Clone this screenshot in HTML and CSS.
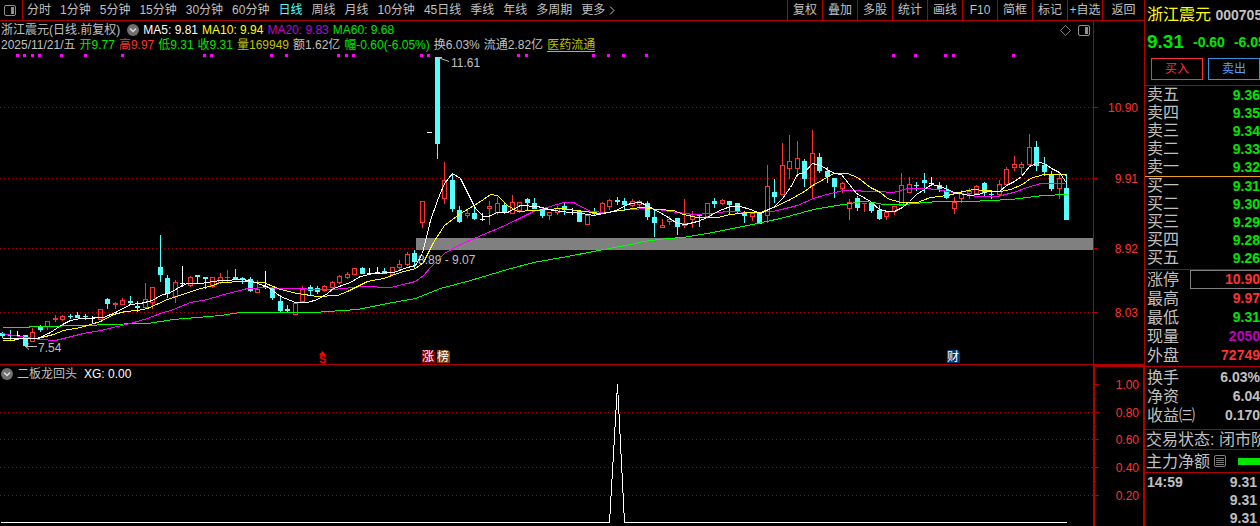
FILE: index.html
```html
<!DOCTYPE html>
<html lang="zh-CN">
<head>
    <meta charset="UTF-8">
    <meta name="viewport" content="width=device-width, initial-scale=1.0">
    <title>浙江震元 000705</title>
    <link rel="stylesheet" href="styles.css">
</head>
<body>
    <main class="workspace">
        <nav class="toolbar">
            <button class="panel-toggle" aria-label="侧栏">
                <svg width="12" height="11" viewBox="0 0 12 11"><rect x="0.5" y="0.5" width="11" height="10" rx="1.5" fill="none" stroke="#909090"/><rect x="7" y="2" width="3" height="7" fill="#909090"/></svg>
            </button>
            <div class="periods">
                <button>分时</button>
                <button>1分钟</button>
                <button>5分钟</button>
                <button>15分钟</button>
                <button>30分钟</button>
                <button>60分钟</button>
                <button class="active">日线</button>
                <button>周线</button>
                <button>月线</button>
                <button>10分钟</button>
                <button>45日线</button>
                <button>季线</button>
                <button>年线</button>
                <button>多周期</button>
                <button class="more">更多<svg width="6" height="9" viewBox="0 0 6 9"><path d="M1 0.5L5 4.5L1 8.5" fill="none" stroke="#c0c0c0"/></svg></button>
            </div>
            <div class="tools">
                <button>复权</button>
                <button>叠加</button>
                <button>多股</button>
                <button>统计</button>
                <button>画线</button>
                <button>F10</button>
                <button>简框</button>
                <button>标记</button>
                <button>+自选</button>
                <button class="back">返回</button>
            </div>
        </nav>

        <section class="pane pane-main">
            <div class="plot">
                <div class="legend">
                    <span class="name">浙江震元(日线.前复权)</span>
                    <button class="drop" aria-label="指标菜单"><svg width="12" height="12" viewBox="0 0 12 12"><circle cx="6" cy="6" r="6" fill="#707070"/><path d="M3 4.5L6 7.5L9 4.5" fill="none" stroke="#ddd" stroke-width="1.5"/></svg></button>
                    <span class="ma5">MA5: 9.81</span>
                    <span class="ma10">MA10: 9.94</span>
                    <span class="ma20">MA20: 9.83</span>
                    <span class="ma60">MA60: 9.68</span>
                    <span class="pane-icons">
                        <svg width="11" height="11" viewBox="0 0 11 11"><path d="M5.5 0.5L10.5 5.5L5.5 10.5L0.5 5.5Z" fill="none" stroke="#808080"/></svg>
                        <svg width="12" height="11" viewBox="0 0 12 11"><rect x="0.5" y="0.5" width="11" height="10" rx="1.5" fill="none" stroke="#909090"/><rect x="7" y="2" width="3" height="7" fill="#909090"/></svg>
                    </span>
                </div>
                <div class="legend quote">
                    <span>2025/11/21/五</span>
                    <span class="down">开9.77</span>
                    <span class="up">高9.97</span>
                    <span class="down">低9.31</span>
                    <span class="down">收9.31</span>
                    <span class="volume">量169949</span>
                    <span>额1.62亿</span>
                    <span class="down">幅-0.60(-6.05%)</span>
                    <span>换6.03%</span>
                    <span>流通2.82亿</span>
                    <a class="sector" href="#">医药流通</a>
                </div>
                <svg id="kline" class="chart"></svg>
            </div>
            <svg id="price-axis" class="axis"></svg>
        </section>

        <section class="pane pane-sub">
            <div class="plot">
                <div class="legend">
                    <button class="drop" aria-label="指标菜单"><svg width="12" height="12" viewBox="0 0 12 12"><circle cx="6" cy="6" r="6" fill="#707070"/><path d="M3 4.5L6 7.5L9 4.5" fill="none" stroke="#ddd" stroke-width="1.5"/></svg></button>
                    <span class="name">二板龙回头</span>
                    <span class="ma5">XG: 0.00</span>
                </div>
                <svg id="signal" class="chart"></svg>
            </div>
            <svg id="signal-axis" class="axis"></svg>
        </section>
    </main>

    <aside class="sidebar">
        <header class="stock">
            <h1><span>浙江震元</span> <b>000705</b></h1>
            <p class="price down"><strong>9.31</strong><b>-0.60</b><b>-6.05%</b></p>
            <div class="trade">
                <button class="buy">买入</button>
                <button class="sell">卖出</button>
            </div>
        </header>
        <table class="book down">
            <tr><th>卖五</th><td>9.36</td></tr>
            <tr><th>卖四</th><td>9.35</td></tr>
            <tr><th>卖三</th><td>9.34</td></tr>
            <tr><th>卖二</th><td>9.33</td></tr>
            <tr><th>卖一</th><td>9.32</td></tr>
        </table>
        <table class="book bids down">
            <tr><th>买一</th><td>9.31</td></tr>
            <tr><th>买二</th><td>9.30</td></tr>
            <tr><th>买三</th><td>9.29</td></tr>
            <tr><th>买四</th><td>9.28</td></tr>
            <tr><th>买五</th><td>9.26</td></tr>
        </table>
        <table class="stats">
            <tr><th>涨停</th><td class="up boxed">10.90</td></tr>
            <tr><th>最高</th><td class="up">9.97</td></tr>
            <tr><th>最低</th><td class="down">9.31</td></tr>
            <tr><th>现量</th><td class="lots">2050</td></tr>
            <tr><th>外盘</th><td class="up">72749</td></tr>
        </table>
        <table class="stats finance">
            <tr><th>换手</th><td>6.03%</td></tr>
            <tr><th>净资</th><td>6.04</td></tr>
            <tr><th>收益㈢</th><td>0.170</td></tr>
        </table>
        <p class="status">交易状态: 闭市阶段</p>
        <p class="netflow">主力净额
            <svg width="12" height="12" viewBox="0 0 12 12"><rect x="0.5" y="0.5" width="11" height="11" rx="1.5" fill="none" stroke="#808080"/><path d="M2 3.5H10M2 5.5H10M2 7.5H10M2 9.5H10" stroke="#808080"/></svg>
            <span class="bar"></span>
        </p>
        <table class="ticks">
            <tr><th>14:59</th><td>9.31</td></tr>
            <tr><th></th><td>9.31</td></tr>
            <tr><th></th><td>9.31</td></tr>
        </table>
    </aside>
    <script src="script.js"></script>
</body>
</html>
```
FILE: styles.css
```css
* {
    box-sizing: border-box;
}

body {
    margin: 0;
    height: 100vh;
    display: grid;
    grid-template-columns: minmax(0, 1fr) 116px;
    overflow: hidden;
    background-color: #000;
    color: #c0c0c0;
    font-family: "Liberation Sans", "Noto Sans CJK SC", sans-serif;
    font-size: 12px;
    line-height: 14px;
}

h1, p {
    margin: 0;
    font-weight: normal;
    white-space: nowrap;
}

button {
    padding: 0;
    border: none;
    background: none;
    color: inherit;
    font: inherit;
    white-space: nowrap;
    cursor: pointer;
}

svg {
    display: block;
    flex: none;
}

.up { color: #ff3232; }
.down { color: #00e600; }

.workspace {
    display: flex;
    flex-direction: column;
    border-bottom: 1px solid #b00000;
}

/* toolbar */

.toolbar {
    display: flex;
    height: 21px;
    border-bottom: 1px solid #b00000;
}

.panel-toggle {
    padding: 0 6px 0 4px;
    border-right: 1px solid #b00000;
}

.periods {
    flex: 1;
    display: flex;
    gap: 9px;
    padding-left: 4px;
}

.periods .active {
    color: #54ffff;
}

.more {
    display: flex;
    align-items: center;
    gap: 4px;
}

.tools {
    display: flex;
}

.tools button {
    width: 35px;
    border-left: 1px solid #b00000;
}

.tools .back {
    width: 42px;
}

/* chart panes */

.pane {
    display: flex;
}

.pane-main {
    height: 343px;
}

.pane-sub {
    flex: 1;
    min-height: 0;
    border-top: 1px solid #b00000;
}

.plot {
    flex: 1;
    min-width: 0;
    display: flex;
    flex-direction: column;
}

.legend {
    display: flex;
    align-items: center;
    gap: 4px;
    height: 16px;
    padding: 2px 0 0 1px;
    white-space: nowrap;
}

.quote {
    height: 15px;
    padding-top: 0;
}

.legend .name {
    padding-right: 3px;
}

.pane-icons {
    display: flex;
    gap: 7px;
    margin-left: auto;
    padding-right: 3px;
}

.ma5 { color: #fff; }
.ma10 { color: #ffff00; }
.ma20 { color: #c800c8; }
.ma60 { color: #00e600; }
.volume { color: #c0c000; }

.sector {
    color: #c0c000;
    text-underline-offset: 2px;
}

.chart {
    width: 100%;
    flex: 1;
    min-height: 0;
}

.axis {
    width: 51px;
    height: 100%;
    border-left: 1px solid #b00000;
}

.pane-sub .axis {
    border: 2px solid #b00000;
    border-right-width: 1px;
}

svg text {
    fill: #c0c0c0;
}

.axis text {
    fill: #ff3232;
    text-anchor: end;
}

.chart .badge {
    fill: #fff;
}

.chart .dividend {
    fill: #ff0000;
    font-size: 11px;
    font-weight: bold;
}

/* quote sidebar */

.sidebar {
    overflow: hidden;
    border-left: 1px solid #b00000;
    font-size: 16px;
}

.sidebar b,
.sidebar td {
    font-size: 14px;
    font-weight: bold;
}

.stock {
    height: 86px;
    padding: 5px 0 0 2px;
    border-bottom: 1px solid #b00000;
}

.stock h1 {
    font-size: 16px;
    line-height: 20px;
}

.stock h1 span {
    color: #ffff00;
}

.price {
    display: flex;
    align-items: center;
    gap: 9px;
    height: 33px;
}

.price strong {
    font-size: 19px;
}

.trade {
    display: flex;
    gap: 5px;
    padding-left: 4px;
}

.trade button {
    flex: none;
    width: 52px;
    height: 22px;
    border: 1px solid;
    font-size: 12px;
}

.trade .buy { color: #ff3232; }

.trade .sell {
    color: #54a0ff;
    border-color: #3c90e0;
}

table {
    width: 100%;
    border-collapse: collapse;
    line-height: 18px;
}

th {
    padding: 0 0 0 2px;
    color: #c0c0c0;
    font-weight: normal;
    text-align: left;
    white-space: nowrap;
}

td {
    padding: 0;
    text-align: right;
}

.bids {
    border-top: 1px solid #f0a020;
    border-collapse: separate;
    border-spacing: 0;
}

.stats {
    border-top: 1px solid #b00000;
    border-collapse: separate;
    border-spacing: 0;
    margin-top: 2px;
    line-height: 19px;
}

.stats .boxed {
    width: 70px;
    border: 1px solid #808080;
    border-right: none;
    line-height: 17px;
}

.lots { color: #c000c0; }

.finance {
    margin-top: 1px;
    padding-top: 1px;
}

.status,
.netflow {
    height: 20px;
    padding-left: 1px;
    border-top: 1px solid #b00000;
    line-height: 19px;
}

.status {
    margin-top: 4px;
}

.netflow {
    display: flex;
    align-items: center;
    gap: 4px;
    height: 23px;
}

.bar {
    flex: 1;
    height: 7px;
    margin-left: 8px;
    background-color: #00e600;
}

.ticks {
    border-top: 1px solid #b00000;
}

.ticks th {
    font-size: 14px;
    font-weight: bold;
}

.ticks td {
    padding-right: 3px;
}
```
FILE: script.js
```js
const RED = '#ff3232';
const CYAN = '#54ffff';
const WHITE = '#ffffff';
const GRID = '#b00000';

// one entry per day: type (c = fall, r = rise, w = flat), high, body top, body bottom, low
const candles = `
c 332 333 336 338|c 330 335 336 340|w 331 335 336 337|c 335 335 346 346|r 328 332 342 342
c 325 326 330 332|r 321 321 327 330|r 315 318 320 322|r 315 316 320 321|c 314 316 317 319
c 312 315 318 318|c 314 316 317 320|w 316 318 319 324|r 309 309 320 320|c 298 299 304 309
r 302 303 305 309|r 298 300 305 305|c 296 301 303 304|c 301 306 308 312|r 283 299 308 308
r 287 287 303 309|c 235 267 275 282|c 275 278 294 298|r 280 282 297 303|w 266 283 284 287
r 276 277 286 287|c 275 275 277 283|c 277 277 279 289|r 277 277 287 288|r 273 277 283 284
r 270 277 278 283|c 269 277 279 280|c 277 278 279 284|c 277 279 291 292|r 280 289 293 293
w 271 286 287 289|c 288 288 298 300|c 295 301 311 312|c 305 309 311 313|r 303 303 315 315
r 286 289 302 302|c 285 287 291 295|c 286 288 292 294|r 285 286 291 292|r 281 282 288 289
r 275 276 283 284|r 272 274 278 279|r 268 268 275 275|c 267 268 274 274|w 268 273 274 275
w 267 272 273 274|c 268 271 274 274|r 267 267 275 275|r 260 264 268 271|r 252 254 265 266
c 250 253 262 268|r 201 201 223 228|w 132 132 133 133|c 57 57 144 159|r 162 180 199 204
c 174 180 209 212|c 206 210 222 223|r 210 213 216 218|c 207 213 219 220|w 213 219 220 221
r 201 206 209 225|r 197 203 213 215|c 203 205 212 214|r 195 202 214 214|r 202 202 211 213
c 198 199 203 210|c 198 203 209 209|c 208 209 216 218|r 212 212 216 220|r 206 208 213 215
c 202 206 210 215|w 208 212 213 215|c 211 211 222 222|r 215 215 225 225|c 208 213 214 216
r 202 203 214 214|r 199 200 207 210|c 197 200 202 205|c 198 201 205 211|r 199 201 206 207
r 200 201 205 208|c 201 203 217 220|c 209 217 223 237|r 219 225 228 228|r 216 219 222 225
c 218 218 227 235|r 199 223 226 228|r 211 216 220 228|c 214 214 216 227|r 203 203 217 217
c 198 201 204 208|r 199 200 204 205|c 201 201 205 214|c 203 203 212 214|c 211 213 216 223
r 213 213 217 221|c 212 212 224 224|r 165 186 216 223|c 179 192 197 203|r 143 165 195 195
r 135 161 169 179|r 141 158 169 177|c 159 161 179 187|r 130 153 186 198|c 153 157 171 173
c 167 171 177 183|c 178 178 187 198|r 182 183 189 193|r 199 202 209 220|c 196 198 208 211
r 203 203 204 212|c 203 203 211 213|c 205 210 219 220|r 212 212 217 220|r 206 206 212 215
r 173 185 206 206|r 177 184 193 193|c 182 185 186 191|c 173 180 183 193|w 177 183 184 186
c 182 185 189 192|c 185 190 198 199|r 197 202 209 214|r 190 193 199 203|r 188 191 194 199
r 185 186 194 194|c 182 183 193 197|c 191 194 195 199|r 180 184 195 197|r 167 169 185 186
r 156 164 168 171|r 162 164 168 175|r 134 147 165 167|c 141 147 166 171|c 157 165 172 176
c 171 174 189 191|r 173 178 189 199|c 174 188 220 220
`.trim().split(/[|\n]/).map(s => s.split(' '));

const averages = [
    ['#00ff00', '2,327 28,327 30,326 93,325 100,324 147,323 173,319 220,315 240,312 313,312 357,309 387,303 415,298 440,288 470,280 507,269 533,262 567,256 593,251 630,244 643,241 667,238 683,237 707,233 737,227 757,223 780,218 813,209 843,204 863,201 873,202 883,204 903,204 937,201 970,201 1010,199 1043,195 1067,194'],
    ['#ff00ff', '2,333 13,335 27,337 40,339 55,340 63,338 83,333 100,330 117,326 130,323 147,318 160,313 173,309 190,302 207,299 220,295 247,288 267,287 280,288 333,289 363,286 390,287 407,283 415,281 423,275 430,267 444,253 460,244 483,234 500,227 517,219 533,211 550,206 563,202 573,202 590,211 607,212 627,209 650,208 677,212 693,214 710,213 727,211 753,212 773,211 797,205 813,198 830,193 843,190 877,191 893,192 907,188 923,188 937,189 953,192 977,196 997,196 1013,192 1027,187 1040,183 1064,183'],
    ['#ffff00', '2,340 12,340 20,338 37,338 53,334 63,330 80,327 100,321 113,314 125,311 137,310 147,308 167,299 182,294 197,289 212,285 220,282 243,281 263,282 280,289 297,293 317,296 337,295 347,291 367,281 383,278 400,272 415,268 423,262 433,242 444,225 460,213 472,206 483,199 490,194 497,195 507,205 517,211 533,210 560,208 577,210 600,213 613,211 640,207 657,209 673,210 683,214 697,217 717,217 730,214 747,212 760,212 773,207 790,199 804,191 812,185 823,179 833,173 847,173 857,177 870,187 880,192 887,198 900,202 917,202 930,197 947,195 963,191 973,189 983,190 1000,191 1010,189 1022,184 1030,178 1043,174 1063,174 1067,175'],
    ['#ffffff', '2,338 37,338 50,332 62,324 70,320 80,318 103,317 115,312 130,304 140,303 152,300 160,295 170,292 182,285 187,283 200,283 220,280 243,279 255,282 268,287 280,296 295,302 307,302 317,299 327,293 333,288 350,282 360,276 373,273 393,272 407,267 415,265 422,253 430,220 437,200 444,183 452,173 460,178 467,192 475,208 483,216 488,216 497,212 507,212 520,205 537,206 553,210 570,212 582,213 593,215 613,211 630,203 640,202 650,207 663,214 677,223 685,224 697,221 707,217 717,211 730,206 740,206 750,209 760,213 773,207 782,198 790,187 797,174 804,172 812,163 820,165 834,173 841,174 856,193 870,201 879,209 887,211 894,211 902,207 909,201 916,194 924,189 931,184 940,186 954,192 969,195 978,194 987,191 999,191 1006,185 1014,181 1021,176 1029,166 1038,162 1044,163 1051,168 1059,172 1067,184']
];

const signals = [16, 23, 31, 38, 60, 84, 121, 203, 210, 270, 285, 337, 345, 352, 420, 427, 517, 525, 592, 607, 622, 645, 892, 914, 944, 952, 1012];

function rect(x, y, w, h, fill) {
    return `<rect x="${x}" y="${y}" width="${w}" height="${h}" fill="${fill}"/>`;
}

function gridLine(y) {
    return `<line x1="0" x2="100%" y1="${y + 0.5}" y2="${y + 0.5}" stroke="${GRID}" stroke-dasharray="1 3"/>`;
}

function polyline(points, color) {
    return `<polyline points="${points}" transform="translate(0.5 0.5)" fill="none" stroke="${color}" shape-rendering="crispEdges"/>`;
}

function candle([type, ...values], index) {
    const [high, top, bottom, low] = values.map(Number);
    const x = Math.round(2.3 + 7.493 * index);
    const color = { c: CYAN, r: RED, w: WHITE }[type];
    let out = '';
    if (type === 'r' && bottom - top > 2) {
        if (top > high) out += rect(x, high, 1, top - high, color);
        if (low > bottom) out += rect(x, bottom, 1, low - bottom, color);
        out += `<rect x="${x - 1.5}" y="${top + 0.5}" width="4" height="${bottom - top - 1}" fill="none" stroke="${color}"/>`;
    } else {
        out += rect(x, high, 1, low - high, color) + rect(x - 2, top, 5, bottom - top, color);
    }
    return out;
}

function badge(x, label, color) {
    return `<path d="M${x} 350H${x + 11}L${x + 13} 352V363H${x}Z" fill="${color}"/><text class="badge" x="${x}" y="361">${label}</text>`;
}

function drawKline() {
    let out = [107, 178, 248, 312].map(gridLine).join('');
    out += '<rect x="416" y="238" width="100%" height="12" fill="#808080"/>';
    out += '<text x="418" y="264">8.89 - 9.07</text>';
    out += candles.map(candle).join('');
    out += averages.map(([color, points]) => polyline(points, color)).join('');
    out += signals.map(x => rect(x, 54, 3, 3, '#ff00ff')).join('');
    out += '<path d="M449 61.5L438 57.5H442M438 57.5L440 61" fill="none" stroke="#c0c0c0"/><text x="451" y="67">11.61</text>';
    out += '<path d="M37 346.5H25M29 343.5L25.5 346.5L29 349.5" fill="none" stroke="#c0c0c0"/><text x="38" y="352">7.54</text>';
    out += '<path d="M319 355L322.5 351L326 355Z" fill="#ff0000"/><text class="dividend" x="319" y="363">S</text>';
    out += badge(422, '涨', '#800000') + badge(437, '榜', '#804000') + badge(947, '财', '#003870');
    document.getElementById('kline').innerHTML = `<g transform="translate(0 -52)">${out}</g>`;
}

function drawSignal() {
    let out = [412, 439, 467, 495].map(gridLine).join('');
    out += polyline('0,522 609,522 617,384 624,522 1066,522', WHITE);
    document.getElementById('signal').innerHTML = `<g transform="translate(0 -381)">${out}</g>`;
}

function drawAxis(id, offset, labels, minor) {
    let out = labels.map(([y, label]) => rect(0, y, 4, 1, GRID) + `<text x="44" y="${y + 5}">${label}</text>`).join('');
    out += minor.map(y => rect(0, y, 1, 1, GRID)).join('');
    document.getElementById(id).innerHTML = `<g transform="translate(0 ${-offset})">${out}</g>`;
}

drawKline();
drawSignal();
drawAxis('price-axis', 21, [[107, '10.90'], [178, '9.91'], [248, '8.92'], [312, '8.03']], []);
drawAxis('signal-axis', 367, [[384, '1.00'], [412, '0.80'], [439, '0.60'], [467, '0.40'], [495, '0.20']], [398, 426, 453, 481]);
```
